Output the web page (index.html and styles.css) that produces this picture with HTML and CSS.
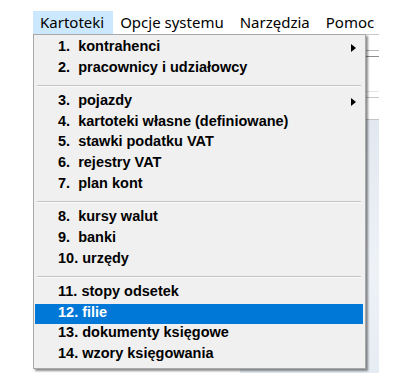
FILE: index.html
```html
<!DOCTYPE html>
<html lang="pl">
<head>
    <meta charset="UTF-8">
    <meta name="viewport" content="width=device-width, initial-scale=1.0">
    <title>Kartoteki</title>

    <link rel="stylesheet" href="styles.css">
</head>
<body>

    <div class="menubar">
        <div class="menu-item open">
            Kartoteki
            <div class="dropdown">
                <div class="row has-sub"><span class="label">1.  kontrahenci</span><span class="arrow"></span></div>
                <div class="row"><span class="label">2.  pracownicy i udziałowcy</span></div>
                <div class="sep"></div>
                <div class="row has-sub"><span class="label">3.  pojazdy</span><span class="arrow"></span></div>
                <div class="row"><span class="label">4.  kartoteki własne (definiowane)</span></div>
                <div class="row"><span class="label">5.  stawki podatku VAT</span></div>
                <div class="row"><span class="label">6.  rejestry VAT</span></div>
                <div class="row"><span class="label">7.  plan kont</span></div>
                <div class="sep"></div>
                <div class="row"><span class="label">8.  kursy walut</span></div>
                <div class="row"><span class="label">9.  banki</span></div>
                <div class="row"><span class="label">10. urzędy</span></div>
                <div class="sep"></div>
                <div class="row"><span class="label">11. stopy odsetek</span></div>
                <div class="row selected"><span class="label">12. filie</span></div>
                <div class="row"><span class="label">13. dokumenty księgowe</span></div>
                <div class="row"><span class="label">14. wzory księgowania</span></div>
            </div>
        </div>
        <div class="menu-item">Opcje systemu</div>
        <div class="menu-item">Narzędzia</div>
        <div class="menu-item">Pomoc</div>
    </div>

    <!-- okno aplikacji pod menu, widoczne tylko z prawej strony -->
    <div class="workspace">
        <div class="ws-bar ws-top"></div>
        <div class="ws-bar ws-thin"></div>
        <div class="ws-bar ws-tools"></div>
        <div class="ws-bar ws-small"></div>
        <div class="ws-bar ws-tabs"></div>
        <div class="ws-bar ws-area"></div>
        <div class="ws-desk"></div>
    </div>

</body>
</html>
```

FILE: styles.css
```css
body {
    margin: 0;
    padding: 0;
    background-color: #ffffff;
    font-family: "Noto Sans", sans-serif;
}

.menubar {
    display: flex;
    margin-top: 11px;
    padding-left: 33px;
    height: 23px;
}

.menu-item {
    position: relative;
    padding: 0 9px 0 7px;
    font-size: 15px;
    line-height: 23px;
    color: #000;
    white-space: nowrap;
}

.menu-item.open {
    background-color: #cce8ff;
}

.dropdown {
    position: absolute;
    top: 100%;
    left: 0;
    z-index: 10;
    width: 328px;
    padding: 3px 2px 2px 1px;
    background-color: #f0f0f0;
    border: 1px solid #a8a8a8;
    box-shadow: 2px 2px 2px rgba(0, 0, 0, 0.45);
    font-family: "Liberation Sans", Arial, sans-serif;
    font-weight: bold;
    font-size: 14.5px;
}

.row {
    display: flex;
    align-items: center;
    height: 17.6px;
    line-height: 17.6px;
    padding: 0 0 3.1px 23px;
    color: #000;
}

.row .label {
    white-space: pre;
}

.row.selected {
    background-color: #0078d7;
    color: #ffffff;
}

.arrow {
    margin-left: auto;
    margin-right: 7px;
    margin-top: 2px;
    width: 0;
    height: 0;
    border-left: 5px solid #000;
    border-top: 4.5px solid transparent;
    border-bottom: 4.5px solid transparent;
}

.sep {
    height: 1px;
    margin: 5.7px 2px 5px 2px;
    background-color: #c4c4c4;
    border-bottom: 1px solid #fbfbfb;
}

.workspace {
    margin-left: 240px;
    width: 139px;
}

.ws-bar {
    border-bottom: 1px solid #c4c4c4;
}

.ws-top {
    height: 0;
    border-bottom-color: #c8c8c8;
}

.ws-thin {
    height: 15px;
    border-bottom-color: #b8b8b8;
}

.ws-tools {
    height: 5px;
    border-bottom-color: #8c8c8c;
}

.ws-small {
    height: 34px;
    border-bottom-color: #e4e4e4;
}

.ws-tabs {
    height: 5px;
    border-bottom-color: #c8c8c8;
}

.ws-area {
    height: 21px;
}

.ws-desk {
    height: 253px;
    background: linear-gradient(#e2e8f0, #eef2f7 60%, #e6ecf3);
}
```
